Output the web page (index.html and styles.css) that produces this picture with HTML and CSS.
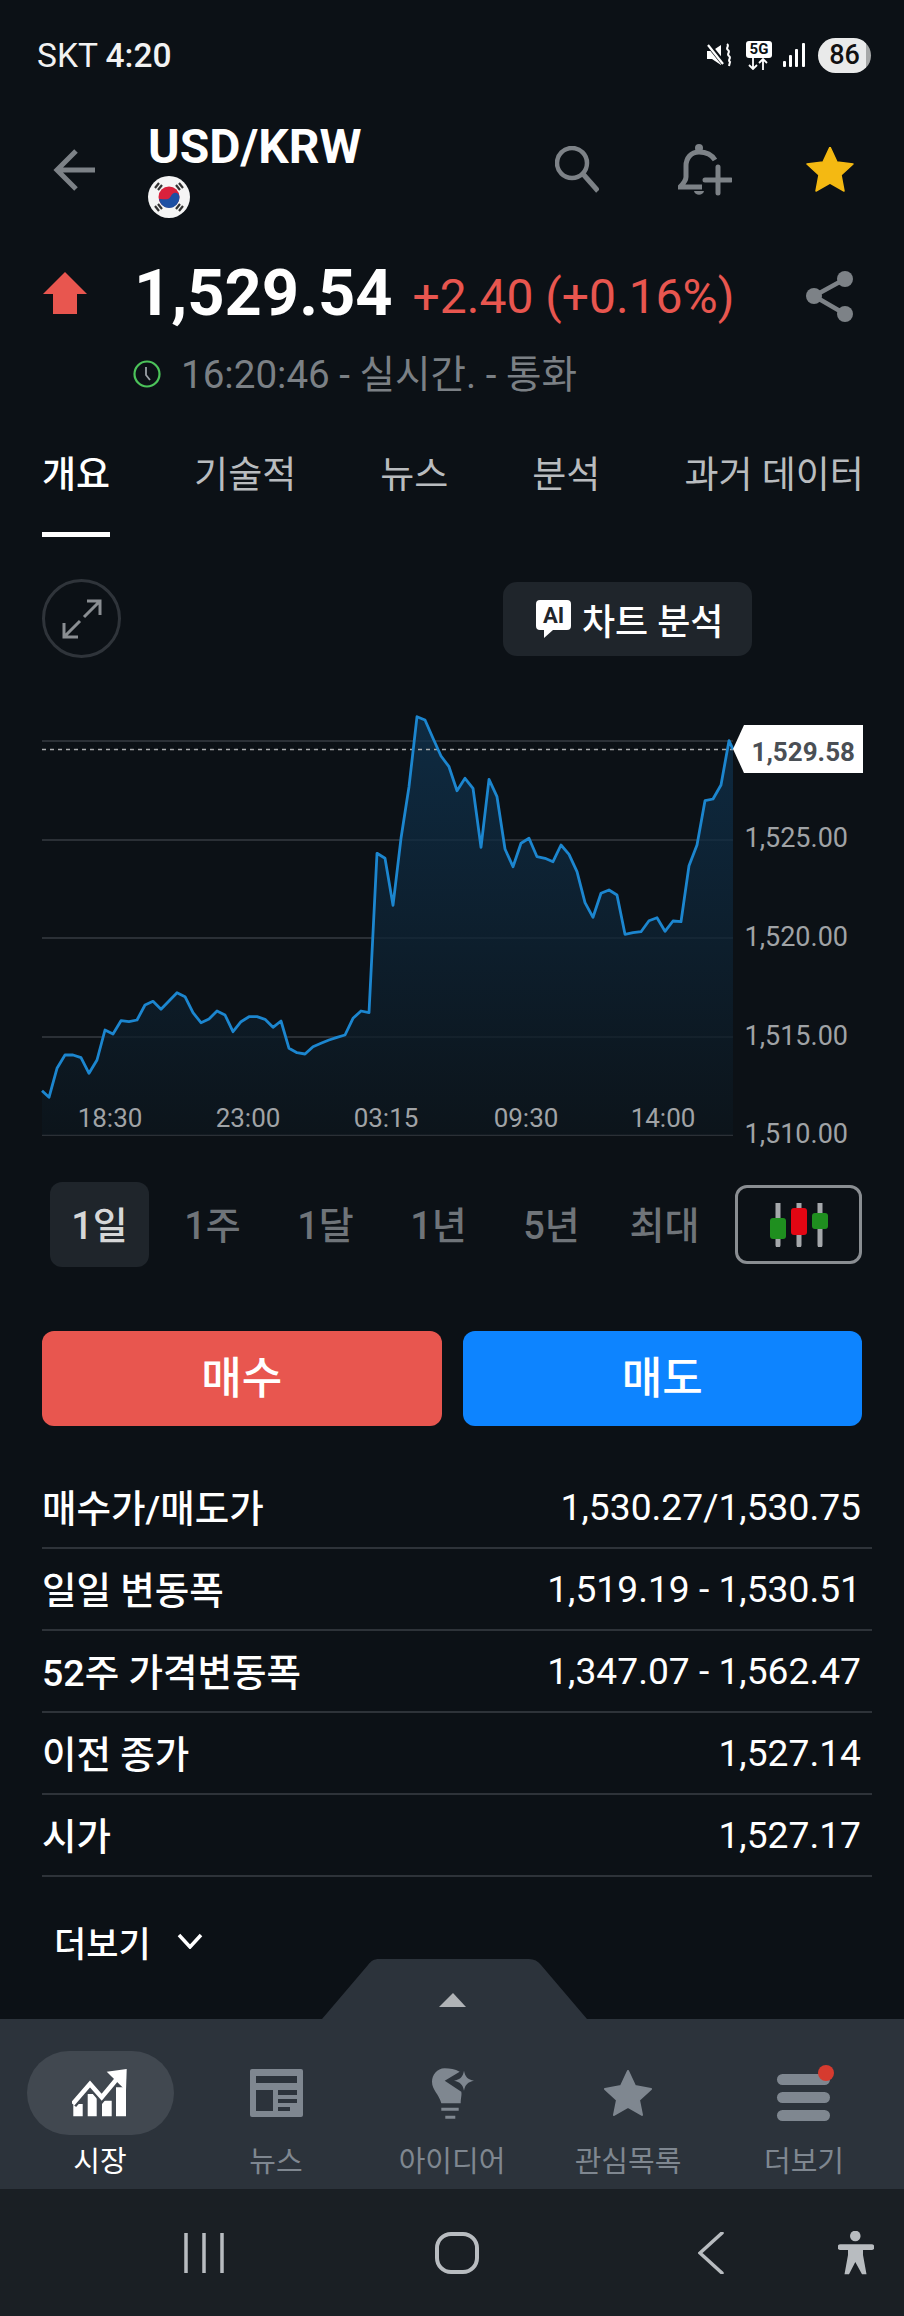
FILE: index.html
```html
<!DOCTYPE html>
<html lang="ko">
<head>
    <meta charset="UTF-8">
    <meta name="viewport" content="width=device-width, initial-scale=1.0">
    <title>USD/KRW</title>
    <link rel="stylesheet" href="styles.css">
</head>
<body>
    <div class="status-bar">
        <div class="status-time">SKT <b>4:20</b></div>
        <div class="status-icons">
            <svg class="icon-mute" width="25" height="24" viewBox="0 0 25 24">
                <path d="M0 8h5l9-6v20l-9-6H0z" fill="#fff"/>
                <path d="M1 1l16 20" stroke="#0c1116" stroke-width="5"/>
                <path d="M1 2l15 19" stroke="#fff" stroke-width="2.2"/>
                <path d="M20 1c3 2-2 4 1 6s-2 4 1 6-2 4 1 6l-1 4" stroke="#fff" stroke-width="2" fill="none"/>
            </svg>
            <div class="net">
                <div class="net-box">5G</div>
                <svg width="24" height="12" viewBox="0 0 24 12">
                    <path d="M7 0v11M3 7l4 4 4-4M17 12V1M13 5l4-4 4 4" stroke="#fff" stroke-width="1.8" fill="none"/>
                </svg>
            </div>
            <svg class="icon-signal" width="22" height="24" viewBox="0 0 22 24">
                <rect x="0" y="18" width="3" height="6" rx="1" fill="#fff"/>
                <rect x="6" y="12" width="3" height="12" rx="1" fill="#fff"/>
                <rect x="12" y="6" width="3" height="18" rx="1" fill="#fff"/>
                <rect x="19" y="0" width="3" height="24" rx="1" fill="#fff"/>
            </svg>
            <div class="battery">86</div>
        </div>
    </div>

    <div class="top-bar">
        <svg class="back" width="44" height="42" viewBox="0 0 44 42">
            <path d="M42 21H4M23 2L4 21l19 19" stroke="#7d8287" stroke-width="5" fill="none"/>
        </svg>
        <div class="title-block">
            <h1>USD/KRW</h1>
            <svg class="flag" width="42" height="42" viewBox="0 0 42 42">
                <circle cx="21" cy="21" r="21" fill="#f5f5f5"/>
                <circle cx="21" cy="21" r="10.500" fill="#d9213c"/>
                <path d="M11 23c1 6 6 9 10 9 6 0 10.500-5 10.500-11 0-3-3-5-5.500-4-3 1-3 5-6 6-3 .8-6-.5-9 0z" fill="#1d4fa3"/>
                <path d="M7 12l4-5M10 14l4-5M28 9l4 5M31 7l4 5M7 30l4 5M10 28l4 5M28 33l4-5M31 35l4-5" stroke="#333" stroke-width="2.200"/>
            </svg>
        </div>
        <div class="top-actions">
            <svg class="search" width="44" height="48" viewBox="0 0 44 48">
                <circle cx="17" cy="17" r="15" stroke="#7d8287" stroke-width="4.500" fill="none"/>
                <path d="M28 28l15 17" stroke="#7d8287" stroke-width="5" fill="none"/>
            </svg>
            <svg class="bell" width="54" height="54" viewBox="0 0 54 54">
                <circle cx="21" cy="5" r="4" fill="#7d8287"/>
                <path d="M37 17C34 12 28 9 21 9 13 9 8 15 8 23v11c0 4-3 7-6 10h22" stroke="#7d8287" stroke-width="5" fill="none"/>
                <path d="M16 48h10c-1 5-9 5-10 0z" fill="#7d8287"/>
                <path d="M40 24v26M27 37h26" stroke="#7d8287" stroke-width="5" stroke-linecap="round"/>
            </svg>
            <svg class="star" width="48" height="46" viewBox="0 0 48 46">
                <path d="M24 0l7 15 16 2-12 11 3 16-14-8-14 8 3-16L1 17l16-2z" fill="#f4b912" stroke="#f4b912" stroke-width="1.500" stroke-linejoin="round"/>
            </svg>
        </div>
    </div>

    <div class="price-row">
        <svg class="up-arrow" width="44" height="42" viewBox="0 0 44 42">
            <path d="M22 0l22 22H34v20H10V22H0z" fill="#e8564f"/>
        </svg>
        <div class="price">1,529.54</div>
        <div class="change">+2.40 (+0.16%)</div>
        <svg class="share" width="48" height="52" viewBox="0 0 48 52">
            <path d="M39 8L8 25l31 18" stroke="#7d8287" stroke-width="4.500" fill="none"/>
            <circle cx="39" cy="8" r="8" fill="#7d8287"/>
            <circle cx="8" cy="25" r="8" fill="#7d8287"/>
            <circle cx="39" cy="43" r="8" fill="#7d8287"/>
        </svg>
    </div>

    <div class="time-row">
        <svg width="28" height="28" viewBox="0 0 28 28">
            <circle cx="14" cy="14" r="12.500" stroke="#4cc35a" stroke-width="2.200" fill="none"/>
            <path d="M13 7v8l4 5" stroke="#9aa0a5" stroke-width="1.800" fill="none"/>
        </svg>
        <span>16:20:46 - 실시간. - 통화</span>
    </div>

    <div class="tabs">
        <div class="tab tab-active">개요</div>
        <div class="tab">기술적</div>
        <div class="tab">뉴스</div>
        <div class="tab">분석</div>
        <div class="tab">과거 데이터</div>
    </div>

    <div class="chart-tools">
        <div class="expand-btn">
            <svg width="40" height="40" viewBox="0 0 40 40">
                <path d="M22 18L37 3M25 2h13v14M18 22L3 37M2 24v14h14" stroke="#8a8e92" stroke-width="3" fill="none"/>
            </svg>
        </div>
        <div class="ai-btn">
            <svg width="35" height="38" viewBox="0 0 35 38">
                <path d="M4 0h27a4 4 0 0 1 4 4v22a4 4 0 0 1-4 4H17l-9 8v-8H4a4 4 0 0 1-4-4V4a4 4 0 0 1 4-4z" fill="#fff"/>
                <text x="17.500" y="23" class="ai-mark">AI</text>
            </svg>
            <span>차트 분석</span>
        </div>
    </div>

    <svg class="chart" width="904" height="460" viewBox="0 700 904 460">
        <defs>
            <linearGradient id="area" x1="0" y1="0" x2="0" y2="1">
                <stop offset="0" stop-color="#0f3350"/>
                <stop offset="1" stop-color="#0c151c"/>
            </linearGradient>
        </defs>
        <path d="M42 741H733M42 840H733M42 938H733M42 1037H733M42 1135H733" stroke="#2b3036" stroke-width="2"/>
        <polygon fill="url(#area)" fill-opacity="0.75" points="42,1135 42,1090.700 49,1097.300 57,1068.300 65,1055 73,1055 81,1057.700 89,1073.300 97,1060 105,1030 113,1034 121,1020.700 129,1021.700 137,1020 145,1005 153,1001.300 161,1009.300 169,1001 177,992.700 185,996.700 193,1012.700 201,1022.700 209,1019 217,1011 225,1015 233,1031.700 241,1021.700 249,1016.700 257,1016.700 265,1019.300 273,1027.300 281,1021 289,1048.300 297,1052.700 305,1054 313,1046.700 321,1043.300 329,1040 337,1037.300 345,1035 353,1018.300 361,1011 369,1012.700 377,853.300 385,858.300 393,905.300 401,838.300 409,786.700 417,716.700 425,720 433,738.300 441,756 449,766.700 457,790.700 465,778.300 473,788.300 481,847.300 489,779.300 497,796.700 505,849 513,866.700 521,843.300 529,838.300 537,856.700 545,858.300 553,861.700 561,845 569,854.300 577,871.700 585,902.700 593,917.300 601,893.300 609,890 617,895 625,934.300 633,932.700 641,931.700 649,920.700 657,917.700 665,931.300 673,921 681,921.700 689,865.700 697,845 705,800.700 713,799 721,785 729,740.700 733,749.300 733,1135"/>
        <path d="M42 749.500H733" stroke="#a8aaac" stroke-width="1.500" stroke-dasharray="4 4"/>
        <polyline fill="none" stroke="#1c86cf" stroke-width="2.800" stroke-linejoin="round" points="42,1090.700 49,1097.300 57,1068.300 65,1055 73,1055 81,1057.700 89,1073.300 97,1060 105,1030 113,1034 121,1020.700 129,1021.700 137,1020 145,1005 153,1001.300 161,1009.300 169,1001 177,992.700 185,996.700 193,1012.700 201,1022.700 209,1019 217,1011 225,1015 233,1031.700 241,1021.700 249,1016.700 257,1016.700 265,1019.300 273,1027.300 281,1021 289,1048.300 297,1052.700 305,1054 313,1046.700 321,1043.300 329,1040 337,1037.300 345,1035 353,1018.300 361,1011 369,1012.700 377,853.300 385,858.300 393,905.300 401,838.300 409,786.700 417,716.700 425,720 433,738.300 441,756 449,766.700 457,790.700 465,778.300 473,788.300 481,847.300 489,779.300 497,796.700 505,849 513,866.700 521,843.300 529,838.300 537,856.700 545,858.300 553,861.700 561,845 569,854.300 577,871.700 585,902.700 593,917.300 601,893.300 609,890 617,895 625,934.300 633,932.700 641,931.700 649,920.700 657,917.700 665,931.300 673,921 681,921.700 689,865.700 697,845 705,800.700 713,799 721,785 729,740.700 733,749.300"/>
        <polygon points="733,749 744,725 863,725 863,773 744,773" fill="#fff"/>
        <text x="855" y="761" class="tag-text">1,529.58</text>
        <text x="848" y="847" class="axis-y">1,525.00</text>
        <text x="848" y="946" class="axis-y">1,520.00</text>
        <text x="848" y="1045" class="axis-y">1,515.00</text>
        <text x="848" y="1143" class="axis-y">1,510.00</text>
        <text x="110" y="1127" class="axis-x">18:30</text>
        <text x="248" y="1127" class="axis-x">23:00</text>
        <text x="386" y="1127" class="axis-x">03:15</text>
        <text x="526" y="1127" class="axis-x">09:30</text>
        <text x="663" y="1127" class="axis-x">14:00</text>
    </svg>

    <div class="ranges">
        <div class="range range-active"><span>1일</span></div>
        <div class="range"><span>1주</span></div>
        <div class="range"><span>1달</span></div>
        <div class="range"><span>1년</span></div>
        <div class="range"><span>5년</span></div>
        <div class="range"><span>최대</span></div>
        <div class="candle-btn">
            <svg width="60" height="44" viewBox="0 0 60 44">
                <path d="M9 0v42M30 0v42M51 0v42" stroke="#a5a8ab" stroke-width="5" stroke-linecap="round"/>
                <rect x="1" y="15" width="16" height="21" rx="3" fill="#1f8f1f"/>
                <rect x="22" y="5" width="16" height="27" rx="3" fill="#e30613"/>
                <rect x="43" y="10" width="16" height="16" rx="3" fill="#1f8f1f"/>
            </svg>
        </div>
    </div>

    <div class="trade">
        <div class="trade-btn buy">매수</div>
        <div class="trade-btn sell">매도</div>
    </div>

    <div class="info">
        <div class="info-row"><span class="info-label">매수가/매도가</span><span>1,530.27/1,530.75</span></div>
        <div class="info-row"><span class="info-label">일일 변동폭</span><span>1,519.19 - 1,530.51</span></div>
        <div class="info-row"><span class="info-label">52주 가격변동폭</span><span>1,347.07 - 1,562.47</span></div>
        <div class="info-row"><span class="info-label">이전 종가</span><span>1,527.14</span></div>
        <div class="info-row"><span class="info-label">시가</span><span>1,527.17</span></div>
    </div>

    <div class="more">
        <span>더보기</span>
        <svg width="26" height="16" viewBox="0 0 26 16">
            <path d="M2 2l11 12L24 2" stroke="#fff" stroke-width="3.500" fill="none"/>
        </svg>
    </div>

    <div class="handle">
        <svg width="265" height="60" viewBox="0 0 265 60">
            <path d="M0 60L46 6C49 2 52 0 57 0H207C212 0 216 2 219 6L265 60z" fill="#2c333b"/>
            <path d="M117 48L131 34 144 48z" fill="#b0b3b6"/>
        </svg>
    </div>

    <div class="nav">
        <div class="nav-item nav-active">
            <div class="nav-icon">
                <svg width="56" height="48" viewBox="0 0 56 48">
                    <path d="M1.300 35h9.400v12.300H1.300zM15.700 25h9v22.300h-9zM30 31.700h9.700v15.600H30zM44 18.300h10v29H44z" fill="#fff"/>
                    <path d="M.7 35L18 15l11.700 13.300L46.300 8.300" stroke="#414850" stroke-width="9" fill="none"/>
                    <path d="M.7 35L18 15l11.700 13.300L46.300 8.300" stroke="#fff" stroke-width="4.500" fill="none"/>
                    <path d="M34.700 2.700L54.700 0 54 21.700z" fill="#fff"/>
                </svg>
            </div>
            <span>시장</span>
        </div>
        <div class="nav-item">
            <div class="nav-icon">
                <svg width="53" height="48" viewBox="0 0 53 48">
                    <rect width="53" height="48" rx="2" fill="#7f8790"/>
                    <path d="M6 7h41v7H6zM6 21h17v21H6zM28 21h19v5H28zM28 30h19v4H28zM28 38h12v4H28z" fill="#2c333b"/>
                </svg>
            </div>
            <span>뉴스</span>
        </div>
        <div class="nav-item">
            <div class="nav-icon">
                <svg width="46" height="54" viewBox="0 0 46 54">
                    <path d="M30.700 5.700C26 3 21 2.300 15.700 2.300 8 2.300 3 9 3 15.700 3 24 10 28 12.300 37.300H31.700C31.700 32 33 29 32.300 25.700L15.700 14.700z" fill="#7f8790"/>
                    <path d="M35 4.700c1 6 4 9 10 10-6 1-9 4-10 10-1-6-4-9-10-10 6-1 9-4 10-10z" fill="#7f8790"/>
                    <path d="M12.300 43.300h17.400M16.300 51.300h10" stroke="#7f8790" stroke-width="3"/>
                </svg>
            </div>
            <span>아이디어</span>
        </div>
        <div class="nav-item">
            <div class="nav-icon">
                <svg width="50" height="47" viewBox="0 0 50 47">
                    <path d="M25 1l7 15 16 3-12 11 3 15-14-8-14 8 3-15L2 19l16-3z" fill="#7f8790" stroke="#7f8790" stroke-width="2" stroke-linejoin="round"/>
                </svg>
            </div>
            <span>관심목록</span>
        </div>
        <div class="nav-item">
            <div class="nav-icon nav-menu">
                <svg width="62" height="56" viewBox="0 0 62 56">
                    <rect x="4" y="9" width="53" height="11" rx="5.500" fill="#7f8790"/>
                    <rect x="4" y="27" width="53" height="11" rx="5.500" fill="#7f8790"/>
                    <rect x="4" y="45" width="53" height="11" rx="5.500" fill="#7f8790"/>
                    <ellipse cx="53" cy="8" rx="8" ry="8" fill="#d63b2f"/>
                </svg>
            </div>
            <span>더보기</span>
        </div>
    </div>

    <div class="sys-nav">
        <svg class="sys-recents" width="40" height="40" viewBox="0 0 40 40">
            <path d="M2 0v40M20 0v40M38 0v40" stroke="#b8bcc0" stroke-width="3.500" stroke-linecap="round"/>
        </svg>
        <svg class="sys-home" width="44" height="42" viewBox="0 0 44 42">
            <rect x="2" y="2" width="40" height="38" rx="14" stroke="#b8bcc0" stroke-width="4" fill="none"/>
        </svg>
        <svg class="sys-back" width="26" height="42" viewBox="0 0 26 42">
            <path d="M24 1L2 21l22 20" stroke="#b8bcc0" stroke-width="3.500" stroke-linecap="round" fill="none"/>
        </svg>
        <svg class="sys-access" width="36" height="44" viewBox="0 0 36 44">
            <circle cx="17.300" cy="5" r="5.300" fill="#b8bcc0"/>
            <path d="M2.500 13.300h31a2.800 2.800 0 0 1 0 5.700H25v5l3.500 19.300H24L17.300 31 11 43.300H6.500L10 24v-5H2.500a2.800 2.800 0 0 1 0-5.700z" fill="#b8bcc0"/>
        </svg>
    </div>
</body>
</html>
```

FILE: styles.css
```css
* {
    margin: 0;
    padding: 0;
    box-sizing: border-box;
}

body {
    width: 904px;
    height: 2316px;
    overflow: hidden;
    background: #0c1116;
    color: #fff;
    font-family: Roboto, "Noto Sans CJK KR", sans-serif;
}

svg {
    display: block;
    flex: none;
}

/* status bar */
.status-bar {
    height: 110px;
    padding: 0 33px 0 37px;
    display: flex;
    align-items: center;
    justify-content: space-between;
}

.status-time {
    font-size: 33.500px;
    color: #f2f2f2;
}

.status-time b {
    font-weight: 500;
}

.status-icons {
    display: flex;
    align-items: center;
}

.icon-mute {
    margin-right: 14px;
}

.net {
    width: 26px;
    margin-right: 11px;
}

.net-box {
    height: 17px;
    background: #fff;
    border-radius: 3px;
    color: #0c1116;
    font-size: 15px;
    font-weight: 700;
    line-height: 17px;
    text-align: center;
}

.icon-signal {
    margin-right: 13px;
}

.battery {
    width: 53px;
    height: 35px;
    border-radius: 18px;
    background: linear-gradient(90deg, #e9eaea 90%, #a6a8a8 90%);
    color: #111;
    font-size: 27px;
    font-weight: 500;
    line-height: 35px;
    text-align: center;
}

/* header */
.top-bar {
    height: 130px;
    padding: 0 50px 0 53px;
    display: flex;
    align-items: flex-start;
}

.back {
    margin-top: 39px;
}

.title-block {
    margin-left: 51px;
    flex: 1;
}

h1 {
    font-size: 48px;
    font-weight: 700;
    line-height: 54px;
    margin-top: 10px;
}

.flag {
    margin-top: 2px;
}

.top-actions {
    display: flex;
    align-items: flex-start;
    margin-top: 33px;
}

.search {
    margin-top: 3px;
}

.bell {
    margin-left: 79px;
}

.star {
    margin-left: 74px;
    margin-top: 4px;
}

.price-row {
    height: 106px;
    padding: 0 50px 0 43px;
    display: flex;
    align-items: center;
}

.up-arrow {
    margin-right: 47px;
}

.price {
    font-size: 65px;
    font-weight: 700;
    line-height: 74px;
}

.change {
    margin: 8px 0 0 20px;
    font-size: 48px;
    line-height: 74px;
    color: #e8564f;
    flex: 1;
}

.share {
    margin-top: 8px;
}

.time-row {
    height: 56px;
    padding-left: 133px;
    display: flex;
    align-items: center;
    gap: 20px;
    font-size: 38.600px;
    color: #7b8085;
}

.time-row span {
    margin-top: -6px;
}

/* tabs */
.tabs {
    height: 135px;
    padding-left: 42px;
    display: flex;
    gap: 84px;
}

.tab {
    height: 135px;
    padding-top: 46px;
    font-size: 37px;
    line-height: 56px;
    color: #b9bcbf;
    white-space: nowrap;
}

.tab-active {
    color: #fff;
    font-weight: 500;
    border-bottom: 5px solid #fff;
}

/* chart */
.chart-tools {
    height: 163px;
    padding: 42px 0 0 42px;
    display: flex;
    align-items: flex-start;
}

.expand-btn {
    width: 79px;
    height: 79px;
    border: 3px solid #2f343a;
    border-radius: 50%;
    display: flex;
    align-items: center;
    justify-content: center;
}

.ai-btn {
    width: 249px;
    height: 74px;
    margin: 3px 0 0 382px;
    background: #1f252b;
    border-radius: 14px;
    display: flex;
    align-items: center;
    padding-left: 33px;
    gap: 11px;
    font-size: 36px;
    font-weight: 500;
}

.ai-mark {
    font-size: 22px;
    font-weight: 700;
    fill: #1f252b;
    text-anchor: middle;
}

.axis-y {
    font-size: 27px;
    fill: #a0a3a6;
    text-anchor: end;
}

.axis-x {
    font-size: 26px;
    fill: #a0a3a6;
    text-anchor: middle;
}

.tag-text {
    font-size: 26px;
    font-weight: 700;
    fill: #4a4f55;
    text-anchor: end;
}

.chart {
    margin-bottom: 22px;
}

/* range selector */
.ranges {
    height: 85px;
    padding: 0 42px 0 43px;
    display: flex;
    align-items: center;
}

.range {
    width: 113px;
    height: 85px;
    display: flex;
    justify-content: center;
    font-size: 38px;
    font-weight: 500;
    color: #6f7479;
}

.range span {
    width: 99px;
    height: 85px;
    line-height: 88px;
    text-align: center;
    border-radius: 12px;
}

.range-active span {
    background: #1f252b;
    color: #d6d7d8;
}

.candle-btn {
    margin-left: auto;
    width: 127px;
    height: 79px;
    border: 3px solid #8a8e92;
    border-radius: 12px;
    display: flex;
    align-items: center;
    justify-content: center;
}

/* buy / sell */
.trade {
    margin-top: 64px;
    padding: 0 42px;
    display: flex;
    gap: 21px;
}

.trade-btn {
    flex: 1;
    height: 95px;
    border-radius: 12px;
    font-size: 44px;
    font-weight: 500;
    line-height: 97px;
    text-align: center;
}

.buy {
    background: #e8564f;
}

.sell {
    background: #0d84ff;
}

/* key figures */
.info {
    margin-top: 41px;
    padding: 0 32px 0 42px;
}

.info-row {
    height: 82px;
    padding-right: 11px;
    border-bottom: 2px solid #2e3339;
    display: flex;
    align-items: center;
    justify-content: space-between;
    font-size: 37.200px;
}

.info-label {
    font-size: 37.500px;
    font-weight: 500;
    margin-top: -3px;
}

.more {
    height: 82px;
    padding: 46px 0 0 54px;
    display: flex;
    align-items: center;
    gap: 26px;
    font-size: 35px;
    font-weight: 500;
}

/* bottom nav */
.handle {
    padding-left: 322px;
}

.nav {
    height: 170px;
    padding: 32px 12px 0;
    background: #2c333b;
    display: grid;
    grid-template-columns: repeat(5, 1fr);
}

.nav-item {
    display: flex;
    flex-direction: column;
    align-items: center;
    font-size: 29px;
    color: #7f8790;
}

.nav-icon {
    width: 147px;
    height: 84px;
    border-radius: 42px;
    display: flex;
    align-items: center;
    justify-content: center;
    margin-bottom: 5px;
}

.nav-active {
    color: #fff;
}

.nav-active .nav-icon {
    background: #414850;
}

.nav-item span {
    line-height: 44px;
}

.sys-nav {
    height: 127px;
    background: #1a1f24;
    display: flex;
    align-items: center;
    padding: 0 0 0 184px;
}

.sys-home {
    margin-left: 211px;
}

.sys-back {
    margin-left: 219px;
}

.sys-access {
    margin-left: 114px;
}
```
